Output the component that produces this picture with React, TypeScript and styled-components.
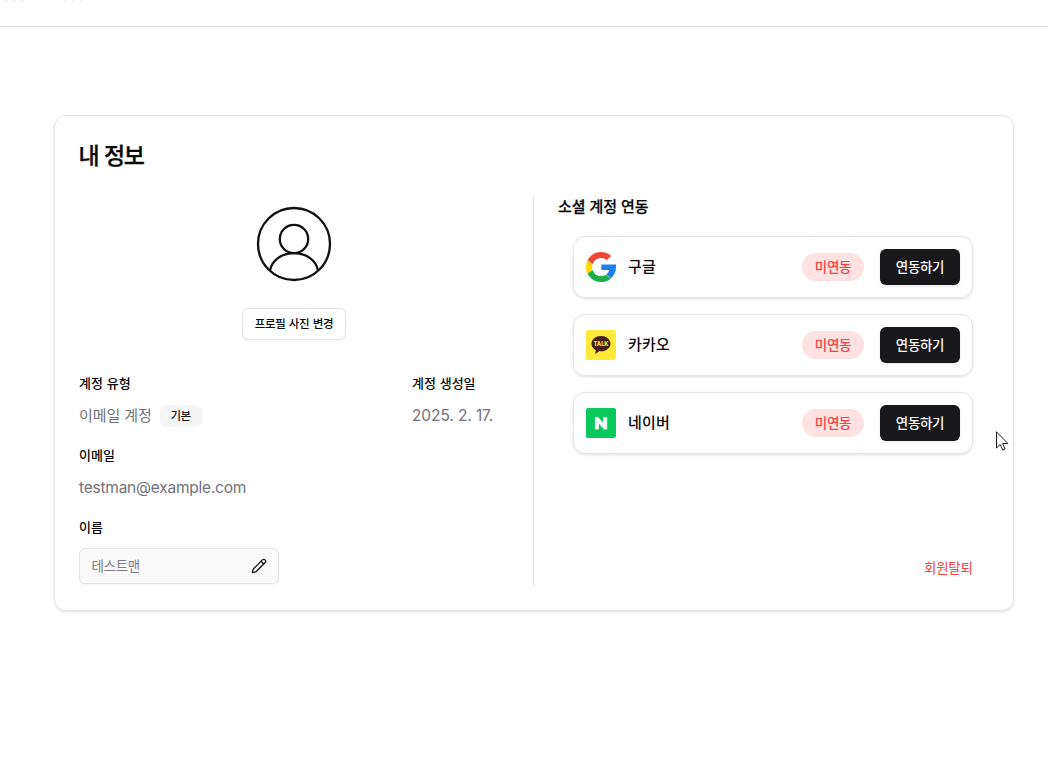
import React from "react";
import styled, { createGlobalStyle } from "styled-components";
import { Pencil } from "lucide-react";

const Global = createGlobalStyle`
  *, *::before, *::after { box-sizing: border-box; }
  body {
    margin: 0;
    background: #fff;
    color: #09090b;
    font-family: Inter, "Noto Sans CJK KR", sans-serif;
    overflow: hidden;
  }
  button, input { font: inherit; color: inherit; margin: 0; }
  svg { display: block; }
`;

const Page = styled.div`
  position: relative;
  height: 768px;
  overflow: hidden;
`;

const TopBar = styled.header`
  display: flex;
  gap: 41px;
  height: 27px;
  padding-left: 5px;
  border-bottom: 1px solid #e4e4e7;
`;

const MarkGroup = styled.div`
  display: flex;
  gap: 6px;
`;

const Mark = styled.span`
  width: 2px;
  height: 1px;
  background: #ececee;
`;

const Card = styled.main`
  width: 960px;
  height: 496px;
  margin: 88px 0 0 54px;
  padding: 24px;
  border: 1px solid #e4e4e7;
  border-radius: 12px;
  box-shadow: 0 1px 3px rgba(0, 0, 0, 0.1), 0 1px 2px -1px rgba(0, 0, 0, 0.1);
`;

const Title = styled.h1`
  margin: 0 0 24px -0.5px;
  height: 32px;
  line-height: 32px;
  font-size: 23px;
  font-weight: 500;
  letter-spacing: -1.2px;
  word-spacing: 0.5px;
  -webkit-text-stroke: 0.3px currentColor;
`;

const Columns = styled.div`
  display: grid;
  grid-template-columns: 455px 455px;
  grid-template-rows: 390px;
`;

const Profile = styled.section`
  padding-right: 24px;
  border-right: 1px solid #e4e4e7;
`;

const AvatarArea = styled.div`
  display: flex;
  flex-direction: column;
  align-items: center;
  gap: 16px;
  margin-bottom: 34px;
`;

const PhotoButton = styled.button`
  width: 104px;
  height: 32px;
  padding: 0 0 2px;
  border: 1px solid #e4e4e7;
  border-radius: 6px;
  background: #fff;
  font-size: 11.5px;
  font-weight: 500;
  letter-spacing: -0.35px;
  word-spacing: 0.7px;
  box-shadow: 0 1px 2px rgba(0, 0, 0, 0.05);
`;

const FieldRow = styled.div`
  display: grid;
  grid-template-columns: 333px 1fr;
`;

const Field = styled.div`
  display: flex;
  flex-direction: column;
  gap: 10px;
  margin-bottom: 18px;
`;

const Label = styled.div`
  height: 20px;
  line-height: 19px;
  font-size: 13px;
  font-weight: 500;
  letter-spacing: -0.02px;
  word-spacing: 0.4px;
`;

const Value = styled.div<{ $size?: number; $spacing?: number }>`
  display: flex;
  align-items: center;
  height: 24px;
  line-height: 24px;
  font-size: ${(p) => p.$size ?? 15.5}px;
  color: #71717a;
  letter-spacing: ${(p) => p.$spacing ?? -0.2}px;
`;

const Badge = styled.span`
  width: 42px;
  height: 22px;
  margin-left: 8px;
  line-height: 22px;
  border-radius: 6px;
  background: #f4f4f5;
  color: #18181b;
  text-align: center;
  font-size: 11.5px;
  font-weight: 500;
  letter-spacing: -0.35px;
`;

const NameBox = styled.div`
  display: flex;
  align-items: center;
  justify-content: space-between;
  width: 200px;
  height: 36px;
  padding: 0 11px 0 12px;
  border: 1px solid #e4e4e7;
  border-radius: 6px;
  background: #fafafa;
  color: #18181b;
  box-shadow: 0 1px 2px rgba(0, 0, 0, 0.05);
`;

const NameText = styled.span`
  margin-left: -0.5px;
  line-height: 20px;
  color: #7c7c84;
  font-size: 13.5px;
  letter-spacing: -0.3px;
`;

const Social = styled.section`
  display: flex;
  flex-direction: column;
  padding: 0 16px 0 24px;
`;

const SocialTitle = styled.h2`
  margin: 0 0 17px;
  height: 23px;
  line-height: 22px;
  font-size: 15px;
  font-weight: 500;
  letter-spacing: -0.15px;
  word-spacing: 0.4px;
  -webkit-text-stroke: 0.25px currentColor;
`;

const ProviderList = styled.div`
  display: flex;
  flex-direction: column;
  gap: 16px;
  margin-left: 15px;
`;

const Provider = styled.div`
  display: flex;
  align-items: center;
  width: 400px;
  height: 62px;
  padding: 0 12px;
  border: 1px solid #e4e4e7;
  border-radius: 12px;
  box-shadow: 0 1px 3px rgba(0, 0, 0, 0.1), 0 1px 2px -1px rgba(0, 0, 0, 0.1);
`;

const ProviderName = styled.span`
  flex: 1;
  margin-left: 12px;
  font-size: 15px;
  line-height: 24px;
  font-weight: 500;
  letter-spacing: 0.2px;
`;

const Status = styled.span`
  width: 62px;
  height: 28px;
  line-height: 28px;
  margin-right: 16px;
  border-radius: 14px;
  background: #fee2e2;
  color: #ef4444;
  text-align: center;
  font-size: 13.5px;
  font-weight: 500;
  letter-spacing: -0.3px;
`;

const LinkButton = styled.button`
  width: 80px;
  height: 36px;
  padding: 0 0 2px;
  border: 0;
  border-radius: 6px;
  background: #18181b;
  color: #fafafa;
  font-size: 13.5px;
  font-weight: 500;
  letter-spacing: -0.35px;
  box-shadow: 0 1px 3px rgba(0, 0, 0, 0.1);
`;

const Withdraw = styled.button`
  align-self: flex-end;
  margin: auto 0.5px 8px 0;
  padding: 0;
  border: 0;
  background: none;
  color: #ef4444;
  height: 20px;
  line-height: 20px;
  font-size: 13.5px;
  letter-spacing: -0.3px;
`;

const Pointer = styled.svg`
  position: absolute;
  left: 996px;
  top: 431px;
`;

const Avatar = () => (
  <svg width="96" height="96" viewBox="0 0 96 96" fill="none" stroke="#111115" strokeWidth="2.3">
    <circle cx="48" cy="48" r="36" />
    <circle cx="48" cy="43" r="14.2" />
    <path d="M24 74.5C26 64 36 57.2 48 57.2S70 64 72 74.5" />
  </svg>
);

const GoogleLogo = () => (
  <svg width="30" height="30" viewBox="0 0 48 48">
    <path fill="#f04438" d="M24 9.6c3.6 0 6.7 1.2 9.2 3.6l6.9-6.9C35.9 2.4 30.4 0 24 0 14.6 0 6.5 5.4 2.6 13.2l8 6.2C12.5 13.7 17.8 9.6 24 9.6z" />
    <path fill="#1a80eb" d="M48 19.8H24.500v9.100h12.700c-.6 3-2.300 5.500-4.800 7.200l7.700 6c4.500-4.200 7.900-10.300 7.900-17.500z" />
    <path fill="#ffd600" d="M10.500 28.600a14.500 14.500 0 0 1 0-9.200l-8-6.200a24 24 0 0 0 0 21.600z" />
    <path fill="#1faf4b" d="M24 48c6.500 0 11.900-2.100 15.900-5.800l-7.700-6c-2.200 1.400-4.900 2.300-8.200 2.300-6.200 0-11.500-4.200-13.400-9.900l-8 6.200C6.500 42.600 14.600 48 24 48z" />
  </svg>
);

const KakaoLogo = () => (
  <svg width="30" height="30" viewBox="0 0 30 30">
    <rect width="30" height="30" rx="2" fill="#ffe93b" />
    <path fill="#452019" d="M15 6c-5.300 0-9.500 3.400-9.500 7.700 0 2.700 1.800 5.100 4.400 6.500l-1 3.800 4.400-2.800 1.700.1c5.300 0 9.500-3.400 9.500-7.600S20.300 6 15 6z" />
    <text x="15" y="15.800" textAnchor="middle" fontFamily="Inter, sans-serif" fontWeight="800" fontSize="5.600" fill="#ffe93b">TALK</text>
  </svg>
);

const NaverLogo = () => (
  <svg width="30" height="30" viewBox="0 0 30 30">
    <rect width="30" height="30" rx="2" fill="#0bc85c" />
    <path
      fill="#f2fff7"
      stroke="#f2fff7"
      strokeLinejoin="round"
      d="M9.400 9.500h2.700l5.600 6.500V9.500h3v11.500h-2.600L12.400 14.600v6.400h-3z"
    />
  </svg>
);

const providers = [
  { name: "구글", logo: <GoogleLogo /> },
  { name: "카카오", logo: <KakaoLogo /> },
  { name: "네이버", logo: <NaverLogo /> },
];

export default function App() {
  return (
    <Page>
      <Global />
      <TopBar>
        {[0, 1].map((g) => (
          <MarkGroup key={g}>
            <Mark />
            <Mark />
            <Mark />
          </MarkGroup>
        ))}
      </TopBar>
      <Card>
        <Title>내 정보</Title>
        <Columns>
          <Profile>
            <AvatarArea>
              <Avatar />
              <PhotoButton>프로필 사진 변경</PhotoButton>
            </AvatarArea>
            <FieldRow>
              <Field>
                <Label>계정 유형</Label>
                <Value $size={15} $spacing={-0.1}>
                  이메일 계정<Badge>기본</Badge>
                </Value>
              </Field>
              <Field>
                <Label>계정 생성일</Label>
                <Value $spacing={-0.1}>2025. 2. 17.</Value>
              </Field>
            </FieldRow>
            <Field>
              <Label>이메일</Label>
              <Value $spacing={-0.23}>testman@example.com</Value>
            </Field>
            <Field>
              <Label>이름</Label>
              <NameBox>
                <NameText>테스트맨</NameText>
                <Pencil size={16} strokeWidth={2} />
              </NameBox>
            </Field>
          </Profile>
          <Social>
            <SocialTitle>소셜 계정 연동</SocialTitle>
            <ProviderList>
              {providers.map((p) => (
                <Provider key={p.name}>
                  {p.logo}
                  <ProviderName>{p.name}</ProviderName>
                  <Status>미연동</Status>
                  <LinkButton>연동하기</LinkButton>
                </Provider>
              ))}
            </ProviderList>
            <Withdraw>회원탈퇴</Withdraw>
          </Social>
        </Columns>
      </Card>
      <Pointer width="13" height="20" viewBox="0 0 13 20">
        <path d="M.5.800v16.200l3.700-3.500 2.600 5.500 2.300-1-2.500-5.500h5.200z" fill="#fff" stroke="#1a1a24" strokeWidth="1" />
      </Pointer>
    </Page>
  );
}
